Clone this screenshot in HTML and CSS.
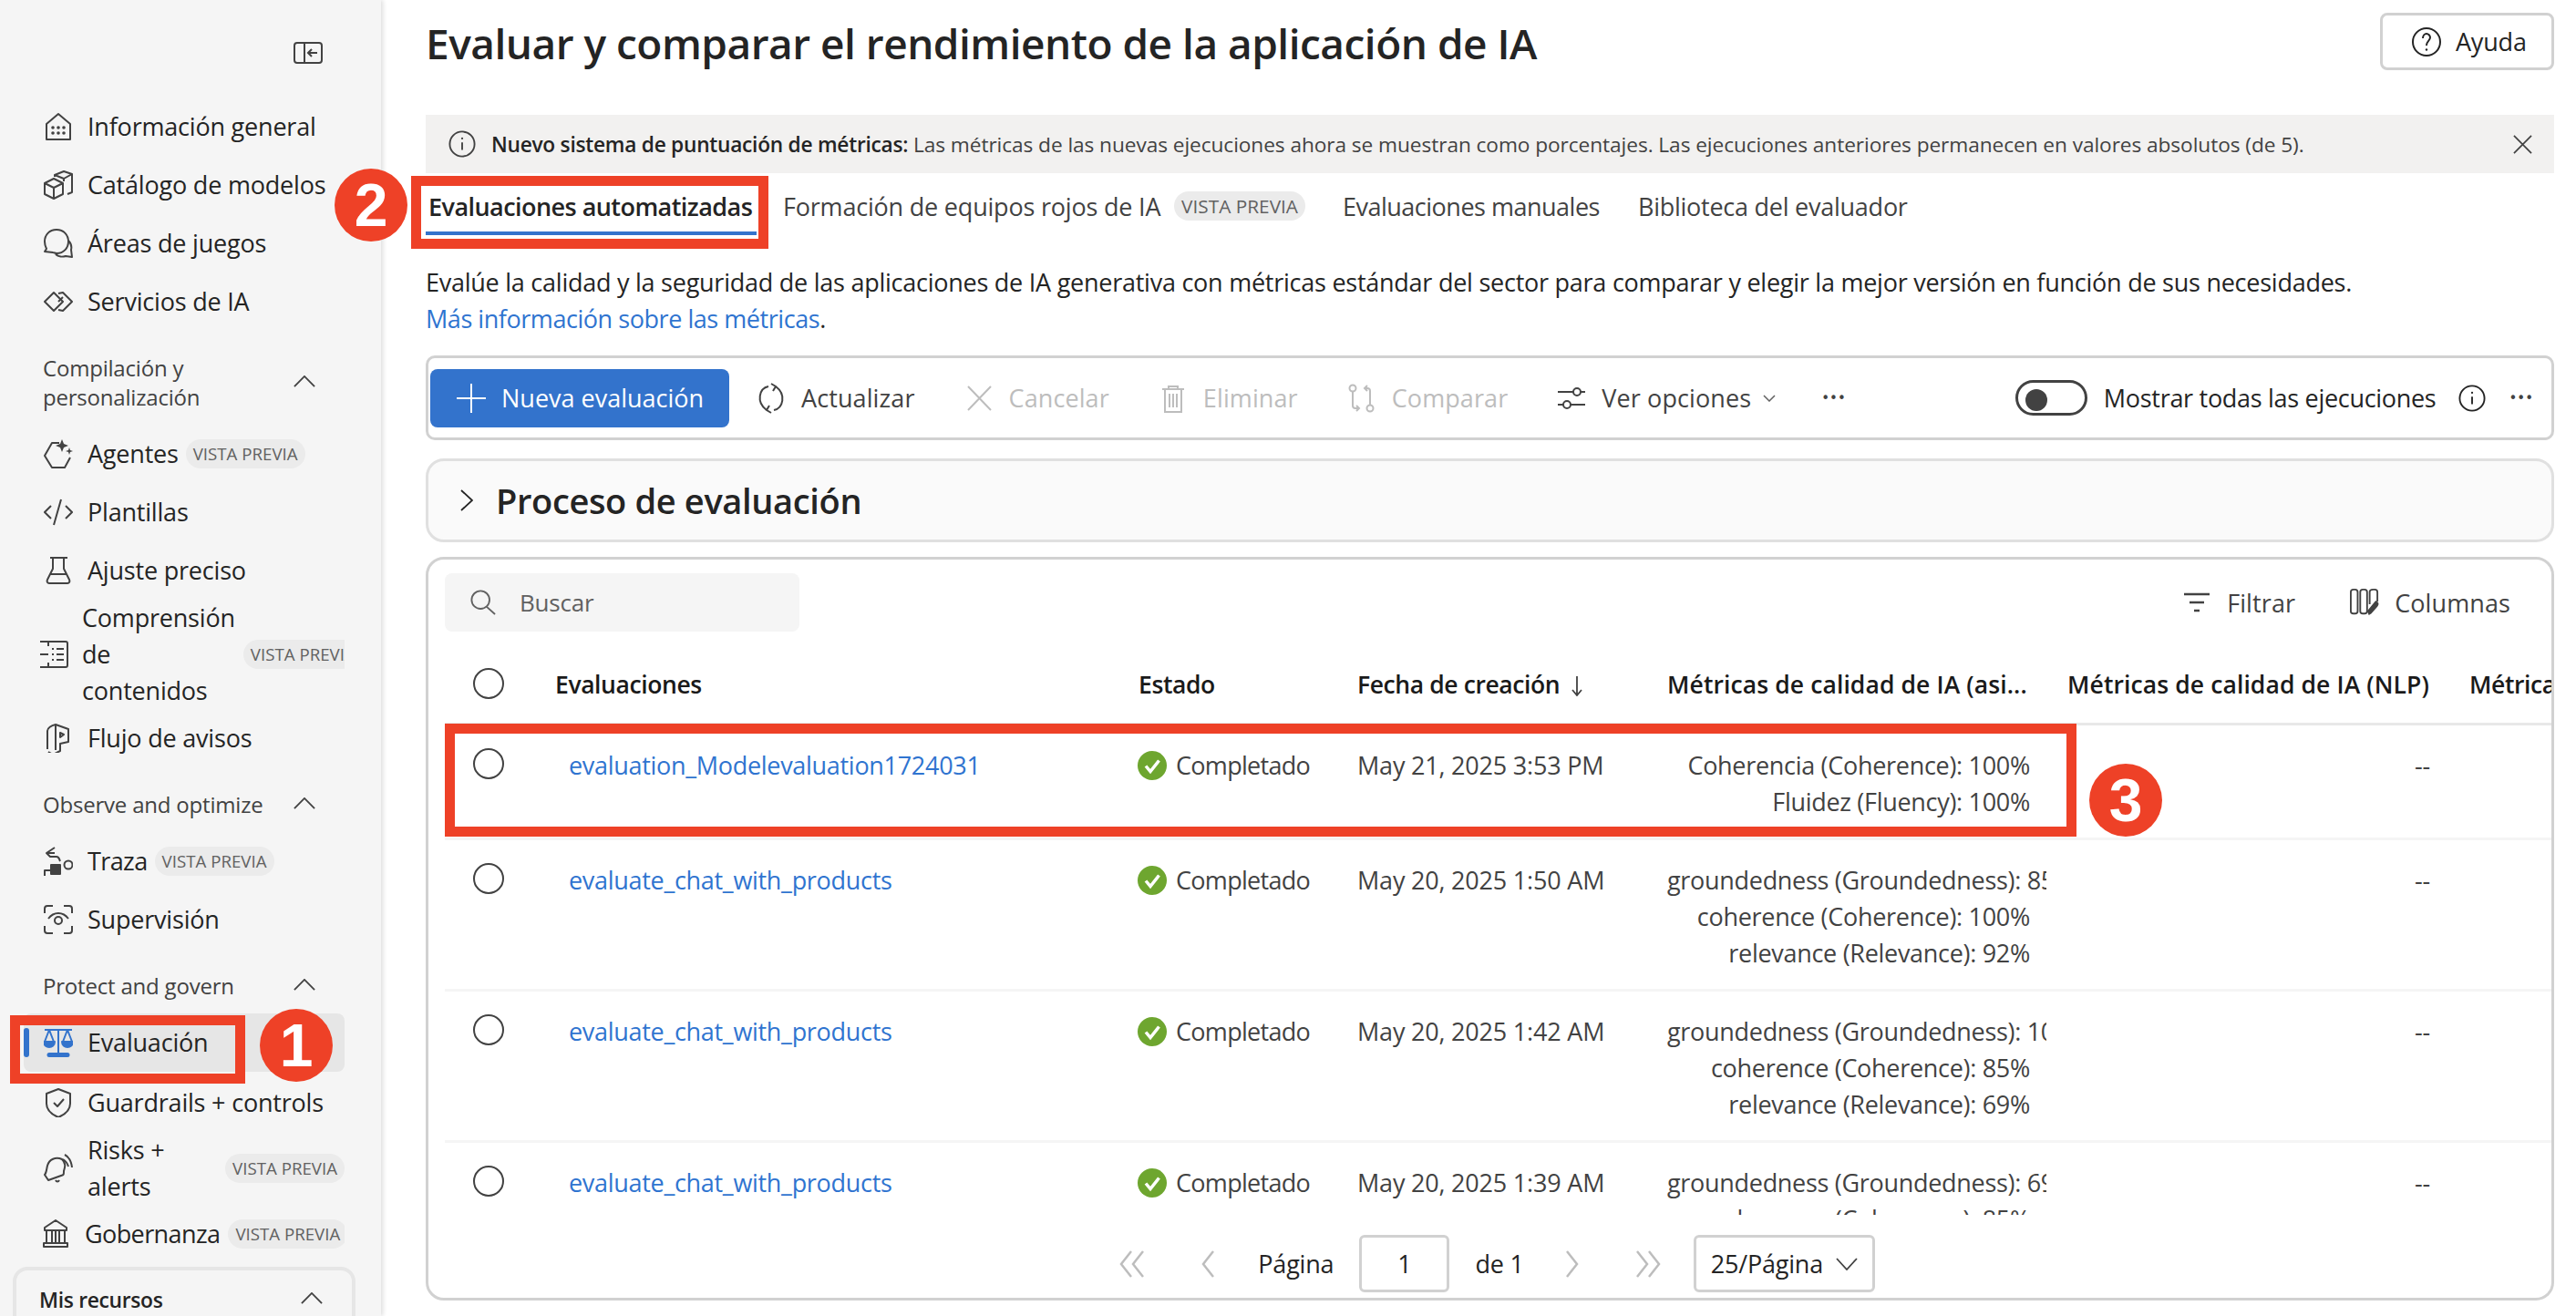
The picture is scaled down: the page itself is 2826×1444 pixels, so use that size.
FILE: index.html
```html
<!DOCTYPE html>
<html lang="es">
<head>
    <meta charset="UTF-8">
    <title>Evaluar y comparar el rendimiento de la aplicación de IA</title>
    <link rel="stylesheet" href="styles.css">
</head>
<body>
    <svg class="sprite" width="0" height="0">
        <symbol id="i-check" viewBox="0 0 32 32"><circle cx="16" cy="16" r="16" fill="#6ea62f"/><path d="M9 16.500l5 6 9.500-12" fill="none" stroke="#fff" stroke-width="3.500"/></symbol>
        <symbol id="i-up" viewBox="0 0 26 14"><path d="M1 13L13 1l12 12" fill="none" stroke="#424242" stroke-width="2"/></symbol>
    </svg>

    <aside class="sidebar">
        <div class="collapse-row">
            <svg class="ico-collapse" viewBox="0 0 32 24" fill="none" stroke="#424242" stroke-width="2"><rect x="1" y="1" width="30" height="22" rx="3"/><path d="M12 1v22M26 12H16M20 8l-4 4 4 4"/></svg>
        </div>
        <a class="nav-item">
            <svg class="ico" viewBox="0 0 32 32" fill="none" stroke="#424242" stroke-width="2" stroke-linejoin="round"><path d="M3 30V13L16 2l13 11v17z"/><g fill="#424242" stroke="none"><circle cx="10" cy="17" r="1.800"/><circle cx="16" cy="17" r="1.800"/><circle cx="22" cy="17" r="1.800"/><circle cx="10" cy="23" r="1.800"/><circle cx="16" cy="23" r="1.800"/><circle cx="22" cy="23" r="1.800"/></g></svg>
            <span>Información general</span>
        </a>
        <a class="nav-item">
            <svg class="ico" viewBox="0 0 32 32" fill="none" stroke="#424242" stroke-width="2" stroke-linejoin="round"><path d="M1 14l10-5 10 5v12l-10 5-10-5zM1 14l10 5 10-5M11 19v12"/><path d="M12 7V5l10-4 9 3v20l-5 2M12 5l10 4 9-5M22 9v3"/></svg>
            <span>Catálogo de modelos</span>
        </a>
        <a class="nav-item">
            <svg class="ico" viewBox="0 0 32 32" fill="none" stroke="#424242" stroke-width="2" stroke-linejoin="round"><path d="M14 1C6 1 1 7 1 14c0 3 1 6 2 8l-2 3 9 1c1 0 3 1 4 1 8 0 13-6 13-13S22 1 14 1z"/><path d="M27 13c3 3 4 6 3 10l1 8-7-1c-3 1-8 1-11-2"/></svg>
            <span>Áreas de juegos</span>
        </a>
        <a class="nav-item">
            <svg class="ico" viewBox="0 0 32 32" fill="none" stroke="#424242" stroke-width="2" stroke-linejoin="round"><path d="M11 6l10 10-10 10L1 16z"/><path d="M16 7l5-1 10 10-10 10-5-1M21 11l-5 5"/></svg>
            <span>Servicios de IA</span>
        </a>

        <div class="nav-section">
            <span>Compilación y<br>personalización</span>
            <svg class="ico-up"><use href="#i-up"/></svg>
        </div>
        <a class="nav-item">
            <svg class="ico" viewBox="0 0 32 32" fill="none" stroke="#424242" stroke-width="2" stroke-linejoin="round"><path d="M17 4H9L1 18l8 13h14l6-11"/><path d="M20 0l2 5 5 2-5 2-2 5-2-5-5-2 5-2zM28 9l1 3 3 1-3 1-1 3-1-3-3-1 3-1z" fill="#424242" stroke="none"/></svg>
            <span>Agentes</span>
            <span class="badge">VISTA PREVIA</span>
        </a>
        <a class="nav-item">
            <svg class="ico" viewBox="0 0 32 32" fill="none" stroke="#424242" stroke-width="2"><path d="M8 9l-7 7 7 7M24 9l7 7-7 7M19 2l-8 28"/></svg>
            <span>Plantillas</span>
        </a>
        <a class="nav-item">
            <svg class="ico" viewBox="0 0 32 32" fill="none" stroke="#424242" stroke-width="2" stroke-linejoin="round"><path d="M7 2h19M10 2v12L4 26c-1 2 0 4 2 4h20c2 0 3-2 2-4l-6-12V2M7 20h18"/></svg>
            <span>Ajuste preciso</span>
        </a>
        <a class="nav-item nav-item-wide">
            <svg class="ico" viewBox="0 0 32 32" fill="none" stroke="#424242" stroke-width="2" stroke-linejoin="round"><path d="M3 2h26c1 0 2 1 2 2v24c0 1-1 2-2 2H3M10 2v5M1 16h9M10 25v5M1 2h5M1 30h5"/><path d="M14 10h2M19 10h8M14 16h2M19 16h8M14 22h2M19 22h8"/></svg>
            <span>Comprensión<br>de<br>contenidos</span>
            <span class="badge">VISTA PREVIA</span>
        </a>
        <a class="nav-item">
            <svg class="ico" viewBox="0 0 32 32" fill="none" stroke="#424242" stroke-width="2" stroke-linejoin="round"><path d="M4 28V8c0-3 4-6 9-7l14 5v14l-9 2v8l-8 4-5-3"/><path d="M13 1v28M18 10l4 2-4 3z"/></svg>
            <span>Flujo de avisos</span>
        </a>

        <div class="nav-section">
            <span>Observe and optimize</span>
            <svg class="ico-up"><use href="#i-up"/></svg>
        </div>
        <a class="nav-item">
            <svg class="ico" viewBox="0 0 32 32" fill="none" stroke="#424242" stroke-width="2" stroke-linejoin="round"><path d="M12 1L3 7l4 4h7c3 0 3 3 4 5M3 7h9"/><circle cx="27" cy="20" r="4.500"/><path d="M1 32v-6h7"/><rect x="8" y="20" width="10" height="10" fill="#424242"/></svg>
            <span class="label-tight">Traza</span>
            <span class="badge">VISTA PREVIA</span>
        </a>
        <a class="nav-item">
            <svg class="ico" viewBox="0 0 32 32" fill="none" stroke="#424242" stroke-width="2" stroke-linejoin="round"><path d="M1 9V4c0-2 1-3 3-3h6M22 1h6c2 0 3 1 3 3v5M31 23v5c0 2-1 3-3 3h-6M10 31H4c-2 0-3-1-3-3v-5"/><circle cx="16" cy="17" r="4"/><path d="M5 15c3-4 7-6 11-6s8 2 11 6"/></svg>
            <span>Supervisión</span>
        </a>

        <div class="nav-section">
            <span>Protect and govern</span>
            <svg class="ico-up"><use href="#i-up"/></svg>
        </div>
        <a class="nav-item nav-item-active">
            <svg class="ico" viewBox="0 0 32 32" fill="#3373cc" stroke="#3373cc" stroke-width="2" stroke-linejoin="round"><path d="M1 2h30M16 2v26M6 2L1 15h10zM26 2l-5 13h10z" fill="none"/><path d="M0 15h12c0 4-3 6-6 6s-6-2-6-6zM20 15h12c0 4-3 6-6 6s-6-2-6-6zM6 28h20c2 0 2 3 0 3H6c-2 0-2-3 0-3z"/></svg>
            <span>Evaluación</span>
        </a>
        <a class="nav-item nav-item-guard">
            <svg class="ico" viewBox="0 0 32 32" fill="none" stroke="#424242" stroke-width="2" stroke-linejoin="round"><path d="M16 1l13 5v11c0 7-6 12-13 15C9 29 3 24 3 17V6z"/><path d="M11 16l4 4 7-8"/></svg>
            <span>Guardrails + controls</span>
        </a>
        <a class="nav-item nav-item-two">
            <svg class="ico" viewBox="0 0 32 32" fill="none" stroke="#424242" stroke-width="2" stroke-linejoin="round"><path d="M20 6c-7-3-14 0-16 7-1 4-1 8-3 10l4 6 14-5c3-1 3-1 3-5 1-4 3-8-2-13zM13 29c1 2 3 2 4 0"/><path d="M23 1c4 2 7 6 8 14M21 6c3 2 5 4 6 8"/></svg>
            <span>Risks +<br>alerts</span>
            <span class="badge badge-end">VISTA PREVIA</span>
        </a>
        <a class="nav-item nav-item-gov">
            <svg class="ico ico-gov" viewBox="0 0 28 32" fill="none" stroke="#424242" stroke-width="2" stroke-linejoin="round"><path d="M14 1L2 9v3h24V9zM4 12v14M24 12v14M10 12v14M14 12v14M18 12v14M1 26h26v4H1z"/></svg>
            <span class="label-tight">Gobernanza</span>
            <span class="badge">VISTA PREVIA</span>
        </a>
        <div class="resources">
            <strong>Mis recursos</strong>
            <svg class="ico-up"><use href="#i-up"/></svg>
        </div>
    </aside>

    <main class="content">
        <header class="top-bar">
            <h1>Evaluar y comparar el rendimiento de la aplicación de IA</h1>
            <button class="help-btn">
                <svg class="ico-help" viewBox="0 0 32 32" fill="none" stroke="#242424" stroke-width="2"><circle cx="16" cy="16" r="15"/><path d="M12 12c0-3 2-5 4-5s4 2 4 4c0 4-4 4-4 9"/><circle cx="16" cy="24.500" r="1.200" fill="#242424" stroke="none"/></svg>
                Ayuda
            </button>
        </header>

        <div class="banner">
            <svg class="ico-info" viewBox="0 0 32 32" fill="none" stroke="#424242" stroke-width="2"><circle cx="16" cy="16" r="14.500"/><path d="M16 14v9"/><circle cx="16" cy="9.500" r="1.200" fill="#424242" stroke="none"/></svg>
            <p><b>Nuevo sistema de puntuación de métricas:</b> Las métricas de las nuevas ejecuciones ahora se muestran como porcentajes. Las ejecuciones anteriores permanecen en valores absolutos (de 5).</p>
            <svg class="ico-close" viewBox="0 0 22 22" fill="none" stroke="#424242" stroke-width="1.800"><path d="M1 1l20 20M21 1L1 21"/></svg>
        </div>

        <nav class="tabs">
            <a class="tab tab-active">Evaluaciones automatizadas</a>
            <a class="tab tab-red">Formación de equipos rojos de IA <span class="badge">VISTA PREVIA</span></a>
            <a class="tab tab-manual">Evaluaciones manuales</a>
            <a class="tab tab-lib">Biblioteca del evaluador</a>
        </nav>

        <p class="intro">Evalúe la calidad y la seguridad de las aplicaciones de IA generativa con métricas estándar del sector para comparar y elegir la mejor versión en función de sus necesidades.<br><a class="link link-more">Más información sobre las métricas</a>.</p>

        <div class="toolbar">
            <button class="primary-btn">
                <svg class="ico-plus" viewBox="0 0 32 32" fill="none" stroke="#fff" stroke-width="2"><path d="M16 0v32M0 16h32"/></svg>
                Nueva evaluación
            </button>
            <span class="tool tool-first">
                <svg class="ico-tool ico-refresh" viewBox="0 0 32 38" fill="none" stroke="#424242" stroke-width="2"><path d="M13 6C3 8-1 23 11 32M14 27l-3 5 5 3M19 32c10-2 14-17 2-26M18 11l3-5-5-3"/></svg>
                Actualizar
            </span>
            <span class="tool tool-off">
                <svg class="ico-tool" viewBox="0 0 32 32" fill="none" stroke="#bdbdbd" stroke-width="2"><path d="M4 3l25 26M29 3L4 29"/></svg>
                Cancelar
            </span>
            <span class="tool tool-off">
                <svg class="ico-tool" viewBox="0 0 32 32" fill="none" stroke="#bdbdbd" stroke-width="2"><path d="M4 6h24M11 6V3h10v3M7 6v25h18V6M12 11v15M16 11v15M20 11v15"/></svg>
                Eliminar
            </span>
            <span class="tool tool-off">
                <svg class="ico-tool" viewBox="0 0 32 32" fill="none" stroke="#bdbdbd" stroke-width="2"><circle cx="6" cy="5" r="3.500"/><circle cx="25" cy="27" r="3.500"/><path d="M6 9v15c0 2 1 3 3 3h3M10 24l3 3-3 3M25 23V8c0-2-1-3-3-3h-3M22 2l-3 3 3 3"/></svg>
                Comparar
            </span>
            <span class="tool">
                <svg class="ico-tool" viewBox="0 0 32 32" fill="none" stroke="#424242" stroke-width="2"><path d="M1 9h17M26 9h5M1 23h6M15 23h16"/><circle cx="22" cy="9" r="4"/><circle cx="11" cy="23" r="4"/></svg>
                Ver opciones
                <svg class="ico-chev" viewBox="0 0 14 8" fill="none" stroke="#616161" stroke-width="1.500"><path d="M1 1l6 6 6-6"/></svg>
            </span>
            <span class="dots dots-mid">•••</span>
            <span class="toggle"><i></i></span>
            <span class="toggle-label">Mostrar todas las ejecuciones</span>
            <svg class="ico-info-sm" viewBox="0 0 32 32" fill="none" stroke="#242424" stroke-width="2"><circle cx="16" cy="16" r="14.500"/><path d="M16 14v9"/><circle cx="16" cy="9.500" r="1.200" fill="#242424" stroke="none"/></svg>
            <span class="dots dots-end">•••</span>
        </div>

        <section class="process">
            <svg class="ico-right" viewBox="0 0 14 24" fill="none" stroke="#242424" stroke-width="1.800"><path d="M1 1l12 11L1 23"/></svg>
            <h2>Proceso de evaluación</h2>
        </section>

        <section class="runs">
            <div class="runs-tools">
                <div class="search">
                    <svg class="ico-search" viewBox="0 0 30 30" fill="none" stroke="#616161" stroke-width="2"><circle cx="12" cy="12" r="10.500"/><path d="M19 20l10 9"/></svg>
                    <span>Buscar</span>
                </div>
                <span class="tool tool-filter">
                    <svg class="ico-tool" viewBox="0 0 32 32" fill="none" stroke="#424242" stroke-width="2.500"><path d="M2 7h28M8 16h16M13 25h6"/></svg>
                    Filtrar
                </span>
                <span class="tool tool-cols">
                    <svg class="ico-tool" viewBox="0 0 34 32" fill="none" stroke="#424242" stroke-width="2" stroke-linejoin="round"><rect x="1" y="1" width="8" height="28" rx="3"/><rect x="12" y="1" width="8" height="28" rx="3"/><path d="M23 18V4c0-2 2-3 4-3h2c2 0 3 1 3 3v11"/><path d="M22 31l-2-5 10-12 3 2c1 2 0 4-1 5l-7 8z" fill="#424242" stroke="none"/></svg>
                    Columnas
                </span>
            </div>

            <div class="table-wrap">
                <div class="row row-head">
                    <span class="radio"></span>
                    <span>Evaluaciones</span>
                    <span>Estado</span>
                    <span>Fecha de creación<svg class="ico-sort" viewBox="0 0 12 22" fill="none" stroke="#424242" stroke-width="1.800"><path d="M6 0v21M1 15l5 6 5-6"/></svg></span>
                    <span class="head-metric">Métricas de calidad de IA (asi...</span>
                    <span class="head-metric">Métricas de calidad de IA (NLP)</span>
                    <span>Métricas</span>
                </div>

                <div class="row">
                    <span class="radio"></span>
                    <a class="link run-name">evaluation_Modelevaluation1724031</a>
                    <span class="status"><svg class="ico-ok"><use href="#i-check"/></svg>Completado</span>
                    <span>May 21, 2025 3:53 PM</span>
                    <div class="metrics"><div>Coherencia (Coherence): 100%</div><div>Fluidez (Fluency): 100%</div></div>
                    <span class="dash">--</span>
                </div>
                <div class="row">
                    <span class="radio"></span>
                    <a class="link run-name">evaluate_chat_with_products</a>
                    <span class="status"><svg class="ico-ok"><use href="#i-check"/></svg>Completado</span>
                    <span>May 20, 2025 1:50 AM</span>
                    <div class="metrics"><div>groundedness (Groundedness): 85%</div><div>coherence (Coherence): 100%</div><div>relevance (Relevance): 92%</div></div>
                    <span class="dash">--</span>
                </div>
                <div class="row">
                    <span class="radio"></span>
                    <a class="link run-name">evaluate_chat_with_products</a>
                    <span class="status"><svg class="ico-ok"><use href="#i-check"/></svg>Completado</span>
                    <span>May 20, 2025 1:42 AM</span>
                    <div class="metrics"><div>groundedness (Groundedness): 100%</div><div>coherence (Coherence): 85%</div><div>relevance (Relevance): 69%</div></div>
                    <span class="dash">--</span>
                </div>
                <div class="row">
                    <span class="radio"></span>
                    <a class="link run-name">evaluate_chat_with_products</a>
                    <span class="status"><svg class="ico-ok"><use href="#i-check"/></svg>Completado</span>
                    <span>May 20, 2025 1:39 AM</span>
                    <div class="metrics"><div>groundedness (Groundedness): 69%</div><div>coherence (Coherence): 85%</div><div>relevance (Relevance): 69%</div></div>
                    <span class="dash">--</span>
                </div>
            </div>

            <div class="pager">
                <svg class="ico-page" viewBox="0 0 32 32" fill="none" stroke="#bdbdbd" stroke-width="2.500"><path d="M14 2L3 16l11 14M27 2L16 16l11 14"/></svg>
                <svg class="ico-page pg-prev" viewBox="0 0 32 32" fill="none" stroke="#bdbdbd" stroke-width="2.500"><path d="M21 2L10 16l11 14"/></svg>
                <span class="pg-label">Página</span>
                <span class="pg-input">1</span>
                <span class="pg-of">de 1</span>
                <svg class="ico-page pg-next" viewBox="0 0 32 32" fill="none" stroke="#bdbdbd" stroke-width="2.500"><path d="M11 2l11 14-11 14"/></svg>
                <svg class="ico-page pg-last" viewBox="0 0 32 32" fill="none" stroke="#bdbdbd" stroke-width="2.500"><path d="M5 2l11 14L5 30M18 2l11 14-11 14"/></svg>
                <span class="pg-select">25/Página
                    <svg class="ico-chev-lg" viewBox="0 0 24 14" fill="none" stroke="#424242" stroke-width="1.800"><path d="M1 1l11 12L23 1"/></svg>
                </span>
            </div>
        </section>
    </main>

    <!-- marcas rojas sobre la captura -->
    <div class="mark mark-one"></div>
    <div class="mark mark-two"></div>
    <div class="mark mark-three"></div>
    <div class="step step-one">1</div>
    <div class="step step-two">2</div>
    <div class="step step-three">3</div>
</body>
</html>
```

FILE: styles.css
```css
* {
    box-sizing: border-box;
}

body {
    position: relative;
    display: flex;
    width: 2826px;
    height: 1444px;
    margin: 0;
    overflow: hidden;
    background: #fff;
    color: #242424;
    font-family: "Open Sans", "Noto Sans", sans-serif;
    font-size: 27px;
    letter-spacing: -0.2px;
}

.sprite {
    position: absolute;
}

/* barra lateral */
.sidebar {
    flex: none;
    width: 418px;
    height: 1444px;
    padding: 0 40px 0 0;
    background: #f5f5f5;
    box-shadow: 2px 0 5px rgba(0, 0, 0, 0.14);
    overflow: hidden;
    z-index: 1;
}

.collapse-row {
    display: flex;
    justify-content: flex-end;
    height: 107px;
    padding: 46px 24px 0 0;
}

.ico-collapse {
    width: 32px;
    height: 24px;
}

.nav-item {
    display: flex;
    align-items: center;
    gap: 16px;
    min-height: 64px;
    padding-left: 48px;
    line-height: 40px;
    color: #242424;
    white-space: nowrap;
    overflow: hidden;
}

.label-tight {
    letter-spacing: -0.6px;
}

.ico {
    flex: none;
    width: 32px;
    height: 32px;
}

.ico-gov {
    width: 28px;
}

.badge {
    display: inline-block;
    height: 32px;
    padding: 0 8px;
    border-radius: 16px;
    background: #ebebeb;
    color: #616161;
    font-size: 18.700px;
    font-weight: 400;
    line-height: 32px;
    letter-spacing: 0;
    vertical-align: 3px;
}

.nav-item .badge {
    flex: none;
    margin-left: -8px;
}

.nav-item .badge-end {
    margin-left: auto;
}

.nav-item-wide {
    height: 120px;
    padding-left: 43px;
    gap: 15px;
}

.nav-item-wide .badge {
    margin-left: -6px;
}

.nav-item-two {
    height: 80px;
}

.nav-item-gov {
    gap: 18px;
    padding-left: 47px;
}

.nav-item-gov .badge {
    margin-left: -9px;
}

.nav-item-guard {
    margin-top: 2px;
}

.nav-item-active {
    position: relative;
    margin-left: 26px;
    padding-left: 22px;
    border-radius: 8px;
    background: #e6e6e6;
    font-weight: 500;
}

.nav-item-active::before {
    content: "";
    position: absolute;
    left: 0;
    top: 16px;
    width: 6px;
    height: 32px;
    border-radius: 3px;
    background: #3373cc;
}

.nav-section {
    display: flex;
    align-items: center;
    justify-content: space-between;
    padding: 25px 32px 14px 47px;
    color: #424242;
    font-size: 24px;
    font-weight: 500;
    line-height: 32px;
}

.ico-up {
    flex: none;
    width: 24px;
    height: 13px;
    margin-bottom: 4px;
}

.resources {
    display: flex;
    align-items: center;
    justify-content: space-between;
    width: 376px;
    height: 90px;
    margin: 4px 0 0 14px;
    padding: 0 32px 18px 25px;
    border: 4px solid #e6e6e6;
    border-radius: 16px;
    font-size: 22.800px;
    letter-spacing: -0.3px;
}

.resources strong {
    font-weight: 600;
}

/* contenido */
.content {
    flex: 1;
    display: flex;
    flex-direction: column;
    min-width: 0;
    padding: 0 24px 0 49px;
}

.top-bar {
    display: flex;
    align-items: flex-start;
    justify-content: space-between;
    flex: none;
    height: 126px;
    padding-top: 14px;
}

h1 {
    margin: 0;
    font-size: 46px;
    font-weight: 600;
    line-height: 66px;
    letter-spacing: -0.5px;
}

.help-btn {
    display: flex;
    align-items: center;
    gap: 16px;
    width: 191px;
    height: 63px;
    padding: 0 0 0 32px;
    border: 3px solid #d1d1d1;
    border-radius: 8px;
    background: #fff;
    color: #242424;
    font: 500 27px "Open Sans", sans-serif;
    letter-spacing: -0.2px;
}

.ico-help {
    width: 32px;
    height: 32px;
}

.banner {
    display: flex;
    align-items: center;
    flex: none;
    height: 64px;
    padding: 0 24px 0 25px;
    background: #f2f1f0;
    font-size: 22.700px;
    letter-spacing: -0.08px;
}

.banner p {
    flex: 1;
    margin: 0 0 0 17px;
    color: #424242;
}

.banner b {
    color: #242424;
    font-weight: 600;
    letter-spacing: -0.25px;
}

.ico-info {
    width: 30px;
    height: 30px;
}

.ico-close {
    width: 21px;
    height: 21px;
}

.tabs {
    display: flex;
    flex: none;
    align-items: flex-start;
    height: 68px;
    padding-top: 14px;
    color: #424242;
}

.tab {
    line-height: 46px;
    white-space: nowrap;
}

.tab-active {
    position: relative;
    width: 363px;
    height: 54px;
    padding-left: 3px;
    color: #242424;
    font-weight: 600;
    border-bottom: 4px solid #3373cc;
    letter-spacing: -0.55px;
}

.tab-red {
    margin-left: 29px;
}

.tab-red .badge {
    margin-left: 8px;
    font-size: 20.800px;
    vertical-align: 3px;
}

.tab-manual {
    margin-left: 41px;
    letter-spacing: -0.5px;
}

.tab-lib {
    margin-left: 42px;
    letter-spacing: -0.25px;
}

.intro {
    flex: none;
    margin: 32px 0 20px;
    line-height: 40px;
    letter-spacing: -0.25px;
}

.link {
    color: #2f74d0;
}

.link-more {
    letter-spacing: -0.45px;
}

.toolbar {
    display: flex;
    align-items: center;
    flex: none;
    height: 93px;
    padding: 0 20px 0 2px;
    border: 3px solid #d1d1d1;
    border-radius: 10px;
}

.primary-btn {
    display: flex;
    align-items: center;
    gap: 17px;
    width: 328px;
    height: 64px;
    padding: 0 0 0 29px;
    border: none;
    border-radius: 8px;
    background: #3373cc;
    color: #fff;
    font: 500 27px "Open Sans", sans-serif;
    letter-spacing: 0;
}

.ico-plus {
    width: 32px;
    height: 32px;
}

.tool {
    display: inline-flex;
    align-items: center;
    gap: 17px;
    margin-left: 54px;
    color: #424242;
    font-weight: 500;
    letter-spacing: 0.1px;
    white-space: nowrap;
}

.tool-first {
    margin-left: 30px;
}

.tool-off {
    color: #bdbdbd;
}

.ico-tool {
    flex: none;
    width: 32px;
    height: 32px;
}

.ico-refresh {
    height: 38px;
}

.ico-chev {
    width: 14px;
    height: 8px;
    margin-left: -4px;
}

.dots {
    color: #424242;
    font-family: "DejaVu Sans", sans-serif;
    font-size: 15px;
    letter-spacing: 0;
}

.dots-mid {
    margin-left: 50px;
}

.toggle {
    display: block;
    width: 79px;
    height: 39px;
    margin-left: auto;
    padding: 7px 0 0 8px;
    border: 3px solid #424242;
    border-radius: 20px;
}

.toggle i {
    display: block;
    width: 24px;
    height: 24px;
    border-radius: 50%;
    background: #424242;
}

.toggle-label {
    margin-left: 18px;
    letter-spacing: -0.3px;
    white-space: nowrap;
}

.ico-info-sm {
    width: 30px;
    height: 30px;
    margin-left: 25px;
}

.dots-end {
    margin-left: 25px;
}

.process {
    display: flex;
    align-items: center;
    flex: none;
    height: 92px;
    margin-top: 20px;
    padding-left: 35px;
    border: 3px solid #e0e0e0;
    border-radius: 20px;
    background: #fafafa;
}

.ico-right {
    width: 14px;
    height: 24px;
}

h2 {
    margin: 0 0 0 25px;
    font-size: 38px;
    font-weight: 600;
    letter-spacing: -0.35px;
}

.runs {
    display: flex;
    flex-direction: column;
    flex: none;
    height: 816px;
    margin-top: 16px;
    padding: 15px 0 0 18px;
    border: 3px solid #d1d1d1;
    border-radius: 20px;
    overflow: hidden;
}

.runs-tools {
    display: flex;
    align-items: center;
    flex: none;
    height: 64px;
}

.search {
    display: flex;
    align-items: center;
    gap: 26px;
    width: 389px;
    height: 64px;
    padding-left: 28px;
    border-radius: 8px;
    background: #f5f5f5;
    color: #616161;
    font-size: 26px;
}

.ico-search {
    width: 28px;
    height: 30px;
}

.tool-filter {
    margin-left: auto;
}

.tool-cols {
    margin: 0 45px 0 60px;
}

.table-wrap {
    flex: 1;
    margin-top: 14px;
    overflow: hidden;
    min-height: 0;
}

.row {
    display: grid;
    grid-template-columns: 121px 640px 240px 340px 439px 441px 400px;
    padding-top: 24px;
    padding-bottom: 19px;
    border-bottom: 3px solid #f5f5f5;
    color: #424242;
    line-height: 40px;
    white-space: nowrap;
}

.row-head {
    height: 89px;
    padding-top: 24px;
    border-bottom-color: #e8e8e8;
    color: #1a1a1a;
    font-size: 26.500px;
    font-weight: 600;
    letter-spacing: -0.4px;
}

.head-metric {
    letter-spacing: 0.1px;
}

.radio {
    width: 34px;
    height: 34px;
    margin: 1px 0 0 31px;
    border: 2.500px solid #424242;
    border-radius: 50%;
}

.row-head .radio {
    margin-top: 2px;
}

.run-name {
    padding-left: 15px;
    letter-spacing: -0.3px;
}

.status {
    display: flex;
    align-items: center;
    height: 40px;
    margin-left: -1px;
    gap: 10px;
    letter-spacing: -0.7px;
}

.ico-ok {
    width: 32px;
    height: 32px;
}

.ico-sort {
    width: 12px;
    height: 22px;
    margin-left: 13px;
    vertical-align: -3px;
}

.metrics {
    width: 416px;
    padding-right: 18px;
    overflow: hidden;
    letter-spacing: -0.3px;
    text-align: right;
}

.dash {
    width: 398px;
    text-align: right;
}

.pager {
    display: flex;
    align-items: center;
    justify-content: center;
    flex: none;
    height: 91px;
    padding: 16px 3px 0 0;
    color: #242424;
}

.ico-page {
    width: 32px;
    height: 32px;
}

.pg-prev {
    margin-left: 51px;
}

.pg-label {
    margin-left: 38px;
}

.pg-input {
    width: 99px;
    height: 63px;
    margin-left: 28px;
    border: 3px solid #d1d1d1;
    border-radius: 6px;
    line-height: 57px;
    text-align: center;
}

.pg-of {
    margin-left: 28px;
}

.pg-next {
    margin-left: 36px;
}

.pg-last {
    margin-left: 51px;
}

.pg-select {
    display: flex;
    align-items: center;
    justify-content: space-between;
    width: 199px;
    height: 63px;
    margin-left: 35px;
    padding: 0 16px;
    border: 3px solid #d1d1d1;
    border-radius: 6px;
}

.ico-chev-lg {
    width: 24px;
    height: 14px;
}

/* anotaciones */
.mark {
    position: absolute;
    border: 11px solid #ee4127;
    z-index: 2;
}

.mark-one {
    left: 11px;
    top: 1114px;
    width: 258px;
    height: 75px;
}

.mark-two {
    left: 451px;
    top: 193px;
    width: 392px;
    height: 80px;
}

.mark-three {
    left: 488px;
    top: 794px;
    width: 1790px;
    height: 124px;
}

.step {
    position: absolute;
    width: 80px;
    height: 80px;
    border-radius: 50%;
    background: #ee4127;
    color: #fff;
    font-family: "Liberation Sans", sans-serif;
    font-size: 66px;
    font-weight: 700;
    line-height: 80px;
    text-align: center;
    letter-spacing: 0;
    z-index: 3;
}

.step-one {
    left: 285px;
    top: 1107px;
}

.step-two {
    left: 367px;
    top: 185px;
}

.step-three {
    left: 2292px;
    top: 838px;
}
```
